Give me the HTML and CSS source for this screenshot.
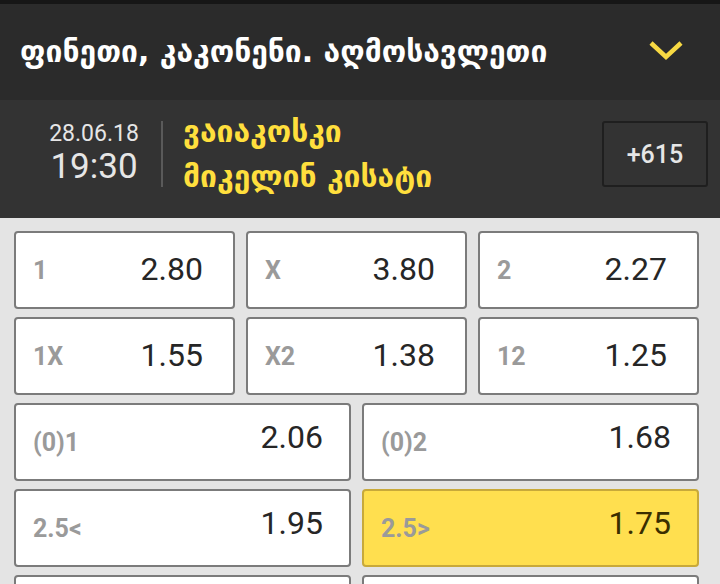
FILE: index.html
```html
<!DOCTYPE html>
<html lang="ka">

<head>
    <meta charset="UTF-8">
    <meta name="viewport" content="width=device-width, initial-scale=1.0">
    <title>ფინეთი, კაკონენი. აღმოსავლეთი</title>
    <link rel="stylesheet" href="styles.css">
</head>

<body>
    <div class="topbar"></div>

    <div class="header">
        <div class="league">ფინეთი, კაკონენი. აღმოსავლეთი</div>
        <svg class="chevron" width="36" height="22" viewBox="0 0 36 22">
            <polyline points="3,4 18,18 33,4" fill="none" stroke="#f7d943" stroke-width="4.5" />
        </svg>
    </div>

    <div class="match">
        <div class="when">
            <div class="date">28.06.18</div>
            <div class="time">19:30</div>
        </div>
        <div class="divider"></div>
        <div class="teams">
            <div class="team">ვაიაკოსკი</div>
            <div class="team">მიკელინ კისატი</div>
        </div>
        <div class="more">+615</div>
    </div>

    <div class="odds">
        <div class="row three">
            <div class="cell"><span class="label">1</span><span class="value">2.80</span></div>
            <div class="cell"><span class="label">X</span><span class="value">3.80</span></div>
            <div class="cell"><span class="label">2</span><span class="value">2.27</span></div>
        </div>
        <div class="row three">
            <div class="cell"><span class="label">1X</span><span class="value">1.55</span></div>
            <div class="cell"><span class="label">X2</span><span class="value">1.38</span></div>
            <div class="cell"><span class="label">12</span><span class="value">1.25</span></div>
        </div>
        <div class="row two">
            <div class="cell"><span class="label">(0)1</span><span class="value">2.06</span></div>
            <div class="cell"><span class="label">(0)2</span><span class="value">1.68</span></div>
        </div>
        <div class="row two">
            <div class="cell"><span class="label">2.5&lt;</span><span class="value">1.95</span></div>
            <div class="cell selected"><span class="label">2.5&gt;</span><span class="value">1.75</span></div>
        </div>
        <div class="row two">
            <div class="cell"><span class="label"></span><span class="value"></span></div>
            <div class="cell"><span class="label"></span><span class="value"></span></div>
        </div>
    </div>
</body>

</html>
```

FILE: styles.css
```css
body {
    margin: 0;
    padding: 0;
    width: 720px;
    height: 584px;
    overflow: hidden;
    background-color: #e4e4e4;
    font-family: Roboto, 'Liberation Sans', sans-serif;
}

.topbar {
    height: 4px;
    background-color: #161616;
}

.header {
    height: 96px;
    display: flex;
    align-items: center;
    justify-content: space-between;
    padding: 0 36px 0 20px;
    background-color: #2b2b2b;
}

.league {
    color: #fff;
    font-family: 'DejaVu Sans', sans-serif;
    font-weight: bold;
    font-size: 30px;
    line-height: 36px;
}

.chevron {
    display: block;
    margin-top: -4px;
}

.match {
    height: 108px;
    padding-bottom: 10px;
    display: flex;
    align-items: center;
    background-color: #333;
}

.when {
    width: 92px;
    margin-left: 48px;
    text-align: center;
    color: #e6e6e6;
}

.date {
    font-size: 23px;
    line-height: 26px;
}

.time {
    font-size: 35px;
    line-height: 40px;
}

.divider {
    width: 2px;
    height: 66px;
    margin: 0 20px 0 21px;
    background-color: #5a5a5a;
}

.teams {
    flex: 1;
    display: flex;
    flex-direction: column;
    gap: 9px;
}

.team {
    color: #ffdf3d;
    font-family: 'DejaVu Sans', sans-serif;
    font-weight: bold;
    font-size: 30px;
    line-height: 36px;
}

.more {
    width: 102px;
    height: 62px;
    margin-right: 12px;
    display: flex;
    align-items: center;
    justify-content: center;
    border: 2px solid #1f1f1f;
    border-radius: 3px;
    color: #e6e6e6;
    font-size: 25px;
    font-weight: 500;
}

.odds {
    width: 685px;
    display: flex;
    flex-direction: column;
    gap: 8px;
    padding: 13px 0 0 14px;
}

.row {
    display: grid;
    gap: 11px;
    height: 78px;
}

.row.three {
    grid-template-columns: repeat(3, 1fr);
}

.row.two {
    grid-template-columns: repeat(2, 1fr);
}

.cell {
    display: flex;
    align-items: center;
    justify-content: space-between;
    padding: 0 30px 0 17px;
    background-color: #fff;
    border: 2px solid #7b7b7b;
    border-radius: 4px;
}

.row.two .cell {
    padding-right: 26px;
}

.label {
    color: #9a9a9a;
    font-size: 25px;
    font-weight: bold;
}

.value {
    color: #262626;
    font-size: 32px;
    margin-top: -3px;
}

.row.two .value {
    margin-top: -11px;
}

.selected {
    background-color: #ffdf4f;
    border-color: #c8a93a;
}

.selected .value {
    color: #3a2e00;
}
```
